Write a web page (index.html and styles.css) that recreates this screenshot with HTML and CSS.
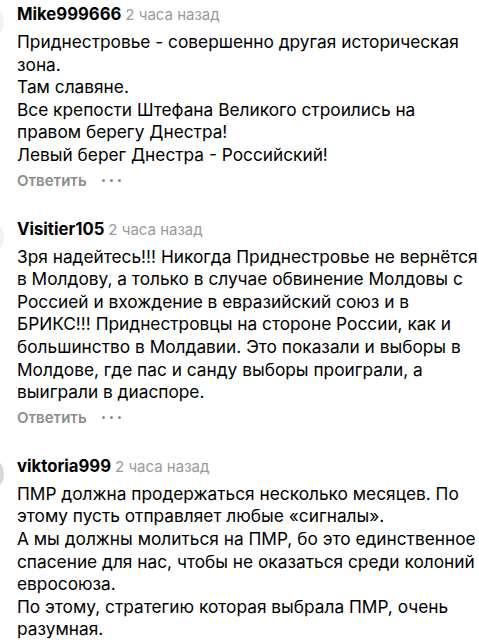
FILE: index.html
```html
<!DOCTYPE html>
<html lang="ru">
<head>
<meta charset="utf-8">
<link rel="stylesheet" href="styles.css">
</head>
<body>
<div class="list">
  <div class="comment">
    <div class="avatar"></div>
    <div class="main">
      <div class="head"><span class="name">Mike999666</span><span class="time">2 часа назад</span></div>
      <div class="text">Приднестровье - совершенно другая историческая зона.<br>Там славяне.<br>Все крепости Штефана Великого строились на правом берегу Днестра!<br>Левый берег Днестра - Российский!</div>
      <div class="actions"><span class="reply">Ответить</span><span class="more"><i></i><i></i><i></i></span></div>
    </div>
  </div>
  <div class="comment">
    <div class="avatar"></div>
    <div class="main">
      <div class="head"><span class="name">Visitier105</span><span class="time">2 часа назад</span></div>
      <div class="text">Зря надейтесь!!! Никогда Приднестровье не вернётся в Молдову, а только в случае обвинение Молдовы с Россией и вхождение в евразийский союз и в БРИКС!!! Приднестровцы на стороне России, как и большинство в Молдавии. Это показали и выборы в Молдове, где пас и санду выборы проиграли, а выиграли в диаспоре.</div>
      <div class="actions"><span class="reply">Ответить</span><span class="more"><i></i><i></i><i></i></span></div>
    </div>
  </div>
  <div class="comment">
    <div class="avatar dark"></div>
    <div class="main">
      <div class="head"><span class="name">viktoria999</span><span class="time">2 часа назад</span></div>
      <div class="text">ПМР должна продержаться несколько месяцев. По этому пусть отправляет любые «сигналы».<br>А мы должны молиться на ПМР, бо это единственное спасение для нас, чтобы не оказаться среди колоний евросоюза.<br>По этому, стратегию которая выбрала ПМР, очень разумная.</div>
    </div>
  </div>
</div>
</body>
</html>
```
FILE: styles.css
```css
* { box-sizing: border-box; }
html, body { margin: 0; padding: 0; background: #fff; }
body { font-family: Inter, "Noto Sans", sans-serif; color: #000; }
.list { display: flex; flex-direction: column; gap: 27px; margin-left: -32px; padding-top: 4px; }
.comment { display: flex; gap: 13px; }
.avatar { flex: 0 0 36px; width: 36px; height: 36px; border-radius: 50%; background: #f2f2f2; }
.avatar.dark { background: #d6d8dc; }
.main { flex: 1; padding-right: 0; }
.head { display: flex; align-items: baseline; gap: 4px; height: 24px; }
.name { font-size: 16.7px; font-weight: 700; }
.time { font-size: 15px; color: #9a9a9a; }
.text { font-size: 17.3px; line-height: 22.6px; margin-top: 3px; }
.actions { display: flex; align-items: center; gap: 15px; margin-top: 3px; height: 22px; }
.reply { font-size: 15px; font-weight: 600; color: #8c8c8c; }
.more { display: flex; gap: 5px; }
.more i { width: 3px; height: 3px; border-radius: 50%; background: #8c8c8c; }
```
